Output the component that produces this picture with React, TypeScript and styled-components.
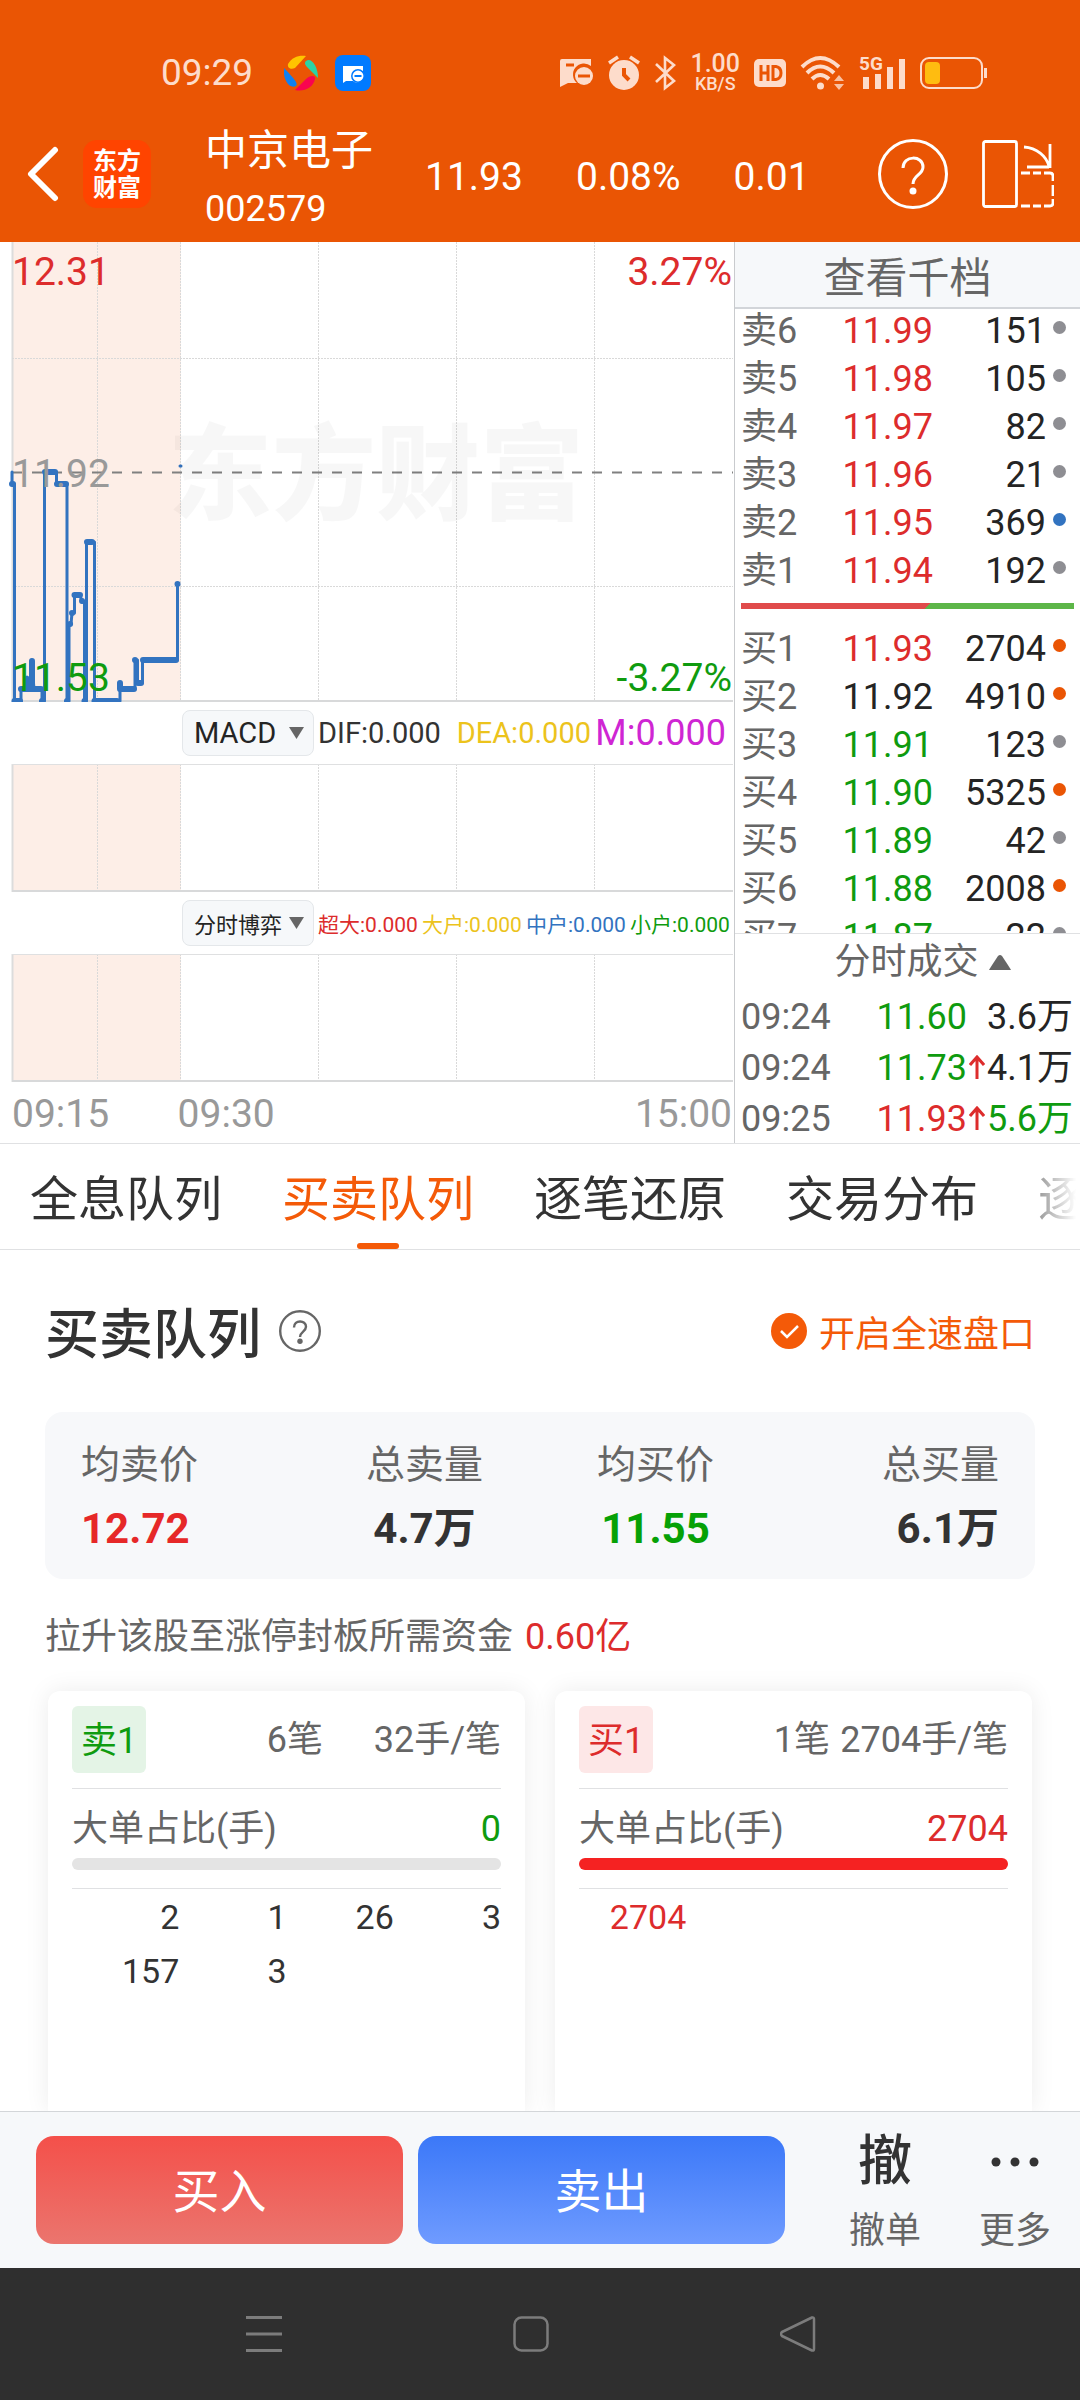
import React from "react";
import styled, { createGlobalStyle } from "styled-components";

const color = {
  brand: "#ea5504",
  accent: "#f45a08",
  up: "#dd2c2c",
  down: "#0f9b0f",
  text: "#333333",
  strong: "#242424",
  muted: "#666666",
  faint: "#999999",
  line: "#e0e1e3",
  panel: "#f6f8fa",
  blue: "#3273c0",
  yellow: "#ecc31c",
  magenta: "#cf26d3",
  status: "#fddccb",
};

const GlobalStyle = createGlobalStyle`
  * { box-sizing: border-box; }
  body {
    margin: 0;
    background: #ffffff;
    font-family: Roboto, "Noto Sans CJK SC", sans-serif;
    font-size: 36px;
    color: ${color.text};
  }
  button {
    margin: 0;
    padding: 0;
    border: 0;
    background: none;
    color: inherit;
    font: inherit;
    cursor: pointer;
  }
  h1, h2, p { margin: 0; font-weight: 400; }
  svg { display: block; }
`;

const Page = styled.div`
  display: flex;
  flex-direction: column;
  height: 100vh;
  overflow: hidden;
`;

/* ---------- Header ---------- */

const Top = styled.header`
  flex: none;
  background: ${color.brand};
  color: #ffffff;
`;

const StatusBar = styled.div`
  display: flex;
  align-items: center;
  justify-content: space-between;
  height: 106px;
  padding: 40px 92px 0 161px;
  color: ${color.status};
`;

const StatusGroup = styled.div<{ $gap: number }>`
  display: flex;
  align-items: center;
  gap: ${(p) => p.$gap}px;
`;

const Clock = styled.span`
  margin-right: 14px;
  font-size: 37px;
  line-height: 46px;
`;

const NetSpeed = styled.span`
  display: flex;
  flex-direction: column;
  align-items: center;
  font-size: 18px;
  font-weight: 500;
  line-height: 18px;

  b {
    font-size: 25px;
    font-weight: 500;
    line-height: 22px;
  }
`;

const TitleBar = styled.div`
  display: flex;
  align-items: center;
  height: 136px;
  padding: 0 26px 0 27px;
`;

const Logo = styled.div`
  width: 68px;
  height: 68px;
  margin: 0 54px 0 24px;
  padding: 8px 0;
  border-radius: 14px;
  background: #ff4400;
  font-size: 24px;
  font-weight: 700;
  line-height: 27px;
  text-align: center;
`;

const Stock = styled.div`
  width: 220px;
  padding-top: 14px;
`;

const StockName = styled.h1`
  font-size: 42px;
  line-height: 56px;
`;

const StockCode = styled.p`
  font-size: 36px;
  line-height: 60px;
`;

const Quote = styled.div`
  display: flex;
  gap: 53px;
  padding-top: 6px;
  font-size: 39px;
  line-height: 48px;
`;

const HeaderActions = styled.div`
  display: flex;
  align-items: center;
  gap: 34px;
  margin-left: auto;
`;

/* ---------- Market panel ---------- */

const Market = styled.section`
  display: grid;
  grid-template-columns: 734fr 346fr;
  flex: none;
  border-bottom: 1px solid ${color.line};
`;

const Charts = styled.div`
  min-width: 0;
`;

const Plot = styled.div<{ $height: number }>`
  position: relative;
  height: ${(p) => p.$height}px;

  svg {
    width: 100%;
    height: 100%;
  }
`;

const AxisLabel = styled.span<{ $tone: string; $side: "left" | "right"; $at: "top" | "middle" | "bottom" }>`
  position: absolute;
  ${(p) => (p.$side === "left" ? "left: 12px;" : "right: 2px;")}
  ${(p) => ({ top: "top: 7px;", middle: "top: 209px;", bottom: "bottom: 1px;" })[p.$at]}
  color: ${(p) => p.$tone};
  font-size: 39px;
  line-height: 46px;
`;

const Watermark = styled.span`
  position: absolute;
  top: 165px;
  left: 168px;
  color: rgba(0, 0, 0, 0.03);
  font-size: 104px;
  font-weight: 900;
  line-height: 140px;
`;

const IndicatorRow = styled.div`
  display: flex;
  align-items: center;
  height: 62px;
  padding-left: 24.8%;
`;

const Picker = styled.button<{ $size: number }>`
  display: flex;
  flex: none;
  align-items: center;
  justify-content: space-between;
  width: 132px;
  height: 46px;
  margin-right: 4px;
  padding: 0 9px 0 11px;
  border: 1px solid #e4e7ea;
  border-radius: 8px;
  background: ${color.panel};
  color: ${color.strong};
  font-size: ${(p) => p.$size}px;
`;

const Reading = styled.span<{ $tone: string; $size: number }>`
  flex: 1 1 0;
  min-width: 0;
  color: ${(p) => p.$tone};
  font-size: ${(p) => p.$size}px;
  white-space: nowrap;
`;

const TimeAxis = styled.div`
  display: grid;
  grid-template-columns: 23% 1fr auto;
  height: 61px;
  padding: 0 2px 0 12px;
  color: ${color.faint};
  font-size: 39px;
  line-height: 64px;
`;

const Book = styled.div`
  display: flex;
  flex-direction: column;
  min-width: 0;
  border-left: 1px solid #c9cbce;
`;

const BookTitle = styled.button`
  height: 67px;
  border-bottom: 2px solid #d2d5d9;
  background: ${color.panel};
  color: ${color.muted};
  font-size: 42px;
`;

const BookScroller = styled.div`
  height: 624px;
  overflow: hidden;
`;

const Table = styled.table<{ $row: number }>`
  width: 100%;
  table-layout: fixed;
  border-collapse: collapse;
  font-size: 36px;
  line-height: ${(p) => p.$row - 4}px;

  td,
  th {
    height: ${(p) => p.$row}px;
    padding: 4px 0 0;
    font-weight: 400;
    text-align: right;
    white-space: nowrap;
  }
  th {
    padding-left: 6px;
    color: ${color.muted};
    text-align: left;
  }
`;

const Col = styled.col<{ $width: number }>`
  width: ${(p) => p.$width}px;
`;

const ScrolledBook = styled.div`
  margin-top: -4px;
`;

const Tone = styled.td<{ $tone: string }>`
  color: ${(p) => p.$tone};
`;

const DotCell = styled.td`
  && {
    padding-left: 7px;
  }
`;

const Dot = styled.i<{ $tone: string }>`
  display: block;
  width: 13px;
  height: 13px;
  margin-bottom: 8px;
  border-radius: 50%;
  background: ${(p) => p.$tone};
`;

const Ratio = styled.div`
  height: 6px;
  margin: 10px 6px 14px;
  background: linear-gradient(135deg, #e04b4b 56%, #5db648 56%);
`;

const TradesTitle = styled.button`
  display: flex;
  align-items: center;
  justify-content: center;
  gap: 10px;
  height: 57px;
  padding-left: 30px;
  border-top: 1px solid ${color.line};
  color: ${color.muted};
  line-height: 54px;
`;

const ArrowCell = styled.td`
  svg {
    margin: 0 0 4px 2px;
  }
`;

const VolumeCell = styled.td<{ $tone: string }>`
  && {
    padding-right: 7px;
  }
  color: ${(p) => p.$tone};
`;

/* ---------- Tabs ---------- */

const Tabs = styled.nav`
  flex: none;
  border-bottom: 1px solid ${color.line};
`;

const TabStrip = styled.div`
  display: flex;
  gap: 60px;
  padding-left: 30px;
  overflow: hidden;
  mask-image: linear-gradient(to right, #000 calc(100% - 80px), transparent calc(100% - 4px));
`;

const Tab = styled.button<{ $active?: boolean }>`
  display: flex;
  flex: none;
  flex-direction: column;
  align-items: center;
  justify-content: space-between;
  height: 105px;
  padding-top: 20px;
  color: ${(p) => (p.$active ? color.accent : color.text)};
  font-size: 48px;
  line-height: 72px;

  &::after {
    content: "";
    width: 42px;
    height: 6px;
    border-radius: 3px;
    background: ${(p) => (p.$active ? color.accent : "transparent")};
  }
`;

/* ---------- Queue ---------- */

const Queue = styled.main`
  display: flex;
  flex: 1;
  flex-direction: column;
  min-height: 0;
  padding: 0 45px;
  overflow: hidden;
`;

const QueueHead = styled.div`
  display: flex;
  flex: none;
  align-items: center;
  height: 162px;
`;

const QueueTitle = styled.h2`
  margin-right: 18px;
  padding-top: 10px;
  font-size: 54px;
  font-weight: 500;
  line-height: 60px;
`;

const HelpButton = styled.button`
  color: ${color.muted};
`;

const FastToggle = styled.button`
  display: flex;
  align-items: center;
  gap: 12px;
  margin-left: auto;
  color: ${color.accent};
`;

const Stats = styled.dl`
  display: grid;
  grid-template-columns: 1fr 1fr;
  column-gap: 114px;
  flex: none;
  margin: 0;
  padding: 33px 36px 25px;
  border-radius: 18px;
  background: #f7f8fa;
`;

const StatPair = styled.div`
  display: flex;
  justify-content: space-between;
`;

const Stat = styled.div<{ $align: string }>`
  text-align: ${(p) => p.$align};

  dt {
    margin-bottom: 19px;
    color: ${color.muted};
    font-size: 39px;
    line-height: 40px;
  }
`;

const StatValue = styled.dd<{ $tone: string }>`
  margin: 0;
  color: ${(p) => p.$tone};
  font-size: 42px;
  font-weight: 700;
  line-height: 50px;
`;

const Note = styled.p`
  flex: none;
  padding-top: 4px;
  color: ${color.muted};
  line-height: 108px;

  em {
    margin-left: 12px;
    color: ${color.up};
    font-style: normal;
  }
`;

const Cards = styled.div`
  display: grid;
  grid-template-columns: 1fr 1fr;
  gap: 30px;
  flex: 1;
  padding: 0 3px;
`;

const Card = styled.article`
  padding: 0 24px;
  border-radius: 12px 12px 0 0;
  background: #ffffff;
  box-shadow: 0 0 24px rgba(0, 0, 0, 0.08);
`;

const CardHead = styled.div`
  display: grid;
  grid-template-columns: 74px 177fr 178fr;
  align-items: center;
  height: 98px;
  border-bottom: 1px solid ${color.line};
  color: ${color.muted};
  line-height: 64px;
  text-align: right;
  white-space: nowrap;
`;

const Badge = styled.span<{ $tone: string; $fill: string }>`
  height: 67px;
  padding-top: 4px;
  border-radius: 6px;
  background: ${(p) => p.$fill};
  color: ${(p) => p.$tone};
  line-height: 63px;
  text-align: center;
`;

const Share = styled.div<{ $tone: string }>`
  display: flex;
  justify-content: space-between;
  padding: 16px 0 5px;
  color: ${color.muted};
  line-height: 48px;

  b {
    color: ${(p) => p.$tone};
    font-weight: 400;
  }
`;

const Meter = styled.div`
  height: 12px;
  border-radius: 6px;
  background: #e4e4e4;
  overflow: hidden;
`;

const MeterFill = styled.div`
  height: 100%;
  background: #f52222;
`;

const Lots = styled.ul`
  display: grid;
  grid-template-columns: repeat(4, 1fr);
  margin: 18px 0 0;
  padding: 1px 0 0;
  border-top: 1px solid ${color.line};
  list-style: none;
  font-size: 34px;
  line-height: 54px;
  text-align: right;
`;

const Lot = styled.li<{ $big: boolean }>`
  color: ${(p) => (p.$big ? color.up : color.text)};
`;

/* ---------- Footer ---------- */

const ActionBar = styled.footer`
  display: flex;
  flex: none;
  align-items: center;
  height: 157px;
  padding-left: 36px;
  border-top: 1px solid #d3d6d9;
  background: ${color.panel};
`;

const TradeButtons = styled.div`
  display: flex;
  flex: 1;
  gap: 15px;
  margin-right: 35px;
`;

const TradeButton = styled.button<{ $from: string; $to: string }>`
  flex: 1;
  height: 108px;
  padding-bottom: 6px;
  border-radius: 18px;
  background: linear-gradient(${(p) => p.$from}, ${(p) => p.$to});
  color: #ffffff;
  font-size: 47px;
`;

const SideAction = styled.button`
  display: flex;
  flex-direction: column;
  align-items: center;
  gap: 15px;
  width: 130px;
  padding-top: 7px;
  color: ${color.muted};
  line-height: 48px;
`;

const SideIcon = styled.span`
  display: flex;
  align-items: center;
  height: 60px;
  color: ${color.text};
  font-size: 54px;
  font-weight: 500;
  line-height: 66px;
`;

const SystemNav = styled.nav`
  display: grid;
  grid-template-columns: repeat(3, 267px);
  justify-content: center;
  align-items: center;
  flex: none;
  height: 132px;
  padding-right: 18px;
  background: #2f2f2f;

  button {
    display: flex;
    justify-content: center;
  }
`;

/* ---------- Drawings ---------- */

const PinwheelIcon = () => (
  <svg width="34" height="36" viewBox="0 0 34 36" aria-hidden="true">
    <path d="M4 9C8 2 15 0 22 1L11 13C7 15 3 13 4 9Z" fill="#ffc400" />
    <path d="M22 6c5-4 12 5 12 17L24 13c-3-3-4-5-2-7Z" fill="#2bd3a4" />
    <path d="M31 24c-2 9-11 13-20 11l11-11c4-4 10-4 9 0Z" fill="#f9044f" />
    <path d="M0 13c1 1 9 9 12 14 3 6-5 6-8 2C1 25-1 19 0 13Z" fill="#0f80f2" />
  </svg>
);

const MailAppIcon = () => (
  <svg width="36" height="36" viewBox="0 0 36 36" aria-hidden="true">
    <rect width="36" height="36" rx="8" fill="#007aff" />
    <path d="M8 11h20v10a6 6 0 0 1-10 5H11l-3 2Z" fill="#fff" />
    <circle cx="23" cy="21" r="6.200" fill="#fff" stroke="#007aff" strokeWidth="1.500" />
    <path d="M19.500 21h7" stroke="#007aff" strokeWidth="2" />
  </svg>
);

const CardIcon = () => (
  <svg width="35" height="30" viewBox="0 0 35 30" fill="currentColor" aria-hidden="true">
    <path d="M3 1h29v7a10 10 0 0 0-14 17H9l-8 4V3a2 2 0 0 1 2-2Z" />
    <path d="M7 7h8" stroke={color.brand} strokeWidth="3" />
    <circle cx="25" cy="18" r="9" />
    <path d="M19 18h12" stroke={color.brand} strokeWidth="3" />
  </svg>
);

const AlarmIcon = () => (
  <svg width="32" height="36" viewBox="0 0 32 36" fill="none" stroke="currentColor" aria-hidden="true">
    <circle cx="16" cy="20" r="15" fill="currentColor" stroke="none" />
    <path d="M1 8l9-6M31 8l-9-6" strokeWidth="3.500" />
    <path d="M16 13v7l5 5" stroke={color.brand} strokeWidth="4" />
  </svg>
);

const BluetoothIcon = () => (
  <svg width="22" height="36" viewBox="0 0 22 36" fill="none" stroke="currentColor" strokeWidth="2.600" aria-hidden="true">
    <path d="M2 9l18 17-9 7V3l9 7L2 27" />
  </svg>
);

const HdIcon = () => (
  <svg width="32" height="28" viewBox="0 0 32 28" fill="none" aria-hidden="true">
    <rect width="32" height="28" rx="5" fill="currentColor" />
    <path d="M7 6v16M14 6v16M7 14h7M19 7.500v13h3q5-1 5-6.500t-5-6.500Z" stroke={color.brand} strokeWidth="3" />
  </svg>
);

const WifiIcon = () => (
  <svg width="45" height="36" viewBox="0 0 45 36" fill="none" stroke="currentColor" strokeWidth="4" aria-hidden="true">
    <path d="M2 12Q20-6 39 12M7 18Q20 5 34 18M12 24q8-8 17 0" />
    <circle cx="20.500" cy="31" r="3.500" fill="currentColor" stroke="none" />
    <path d="M34 26l5-6 5 6ZM34 29l5 6 5-6Z" fill="currentColor" stroke="none" opacity="0.800" />
  </svg>
);

const SignalWrap = styled.span`
  position: relative;
  width: 47px;
  height: 36px;
`;

const SignalLabel = styled.span`
  position: absolute;
  top: 0;
  left: 0;
  font-size: 19px;
  font-weight: 700;
  line-height: 18px;
`;

const Signal = () => (
  <SignalWrap>
    <svg width="47" height="36" viewBox="0 0 47 36" fill="currentColor" aria-hidden="true">
      <path d="M4 22h6v12H4ZM16 19h6v15h-6ZM28 12h6v22h-6ZM40 4h6v30h-6Z" />
    </svg>
    <SignalLabel>5G</SignalLabel>
  </SignalWrap>
);

const BatteryIcon = () => (
  <svg width="68" height="32" viewBox="0 0 68 32" fill="none" aria-hidden="true">
    <rect x="1" y="1" width="61" height="30" rx="8" stroke="currentColor" strokeWidth="2" />
    <rect x="5" y="5" width="15" height="22" rx="4" fill="#ffbc10" />
    <path d="M65.500 11v10" stroke="currentColor" strokeWidth="3" />
  </svg>
);

const BackIcon = () => (
  <svg width="32" height="56" viewBox="0 0 32 56" fill="none" stroke="#fff" strokeWidth="6" strokeLinecap="round" strokeLinejoin="round" aria-hidden="true">
    <path d="M28 4L4 28l24 24" />
  </svg>
);

const HelpIcon = ({ size, stroke }: { size: number; stroke: number }) => (
  <svg width={size} height={size} viewBox="0 0 70 70" fill="none" stroke="currentColor" strokeWidth={stroke} aria-hidden="true">
    <circle cx="35" cy="35" r={35 - stroke / 2} />
    <path d="M25 29c0-13 20-13 20-1 0 8-10 8-10 17" />
    <circle cx="35" cy="52" r={stroke + 0.5} fill="currentColor" stroke="none" />
  </svg>
);

const RotateIcon = () => (
  <svg width="72" height="68" viewBox="0 0 72 68" fill="none" stroke="#fff" strokeWidth="2.800" aria-hidden="true">
    <rect x="1.500" y="1.500" width="33" height="65" rx="2" />
    <path d="M42 7c13 1 22 9 25 19M45 27h22M68 4v24" />
    <path d="M39 33h9M51 33h8M62 33h6q3 0 3 3v5M71 45v11M39 66h9M51 66h8M62 66h6q3 0 3-3v-4" />
  </svg>
);

const Caret = ({ up }: { up?: boolean }) => (
  <svg width={up ? 22 : 15} height={up ? 15 : 12} viewBox="0 0 22 15" preserveAspectRatio="none" fill="#666" aria-hidden="true">
    <path d={up ? "M0 15Q1 13 9 1q2-2 4 0 8 12 9 14Z" : "M0 0h22L11 15Z"} />
  </svg>
);

const RiseArrow = () => (
  <svg width="16" height="24" viewBox="0 0 16 24" fill="none" stroke={color.up} strokeWidth="3" aria-hidden="true">
    <path d="M8 24V2M1 10l7-8 7 8" />
  </svg>
);

const CheckIcon = () => (
  <svg width="36" height="36" viewBox="0 0 36 36" aria-hidden="true">
    <circle cx="18" cy="18" r="18" fill={color.accent} />
    <path d="M10 18l6 6 11-11" fill="none" stroke="#fff" strokeWidth="2.500" />
  </svg>
);

const gridX = [98, 181, 319, 457, 595];

const Grid = ({ height, rows = [] }: { height: number; rows?: number[] }) => (
  <>
    <rect x="12" y="0" width="169" height={height} fill="#fdeee7" />
    <path d={`M12.500 0V${height}`} stroke="#dcdcdc" strokeWidth="2" />
    <g stroke="#d9d9d9" strokeWidth="1" strokeDasharray="2 1">
      {gridX.map((x) => (
        <path key={x} d={`M${x - 0.5} 0V${height}`} />
      ))}
      {rows.map((y) => (
        <path key={y} d={`M12 ${y}.500H733`} />
      ))}
    </g>
    <path d={`M12 ${height - 1}H733`} stroke="#d8d9da" strokeWidth="2" />
  </>
);

const PriceChart = () => (
  <svg viewBox="0 0 734 460" preserveAspectRatio="none" role="img" aria-label="分时走势">
    <Grid height={460} rows={[116, 344]} />
    <path d="M12 230.500H733" stroke="#808080" strokeWidth="2" strokeDasharray="10 10" />
    <g fill="none" stroke={color.blue} strokeLinecap="round" strokeLinejoin="round">
      <path
        strokeWidth="3"
        d="M12 230V242H14.500V459H21V447H27V435V447H31.500V418L34 447H42V459H44.500V230H56.500V242H67V459H69V382H71L72 371H74.500V353H80L82 360H84.500V459H86.500V300H94.500V459H120V441V447H135V418H137.500V441H142.500V418H177.500V342"
      />
      <path
        strokeWidth="6"
        d="M12 242h1M14.500 459H20M21 447H41M27 437v9M32 419v27M42 459h.1M45 230H55M57 242H66M67 459h.1M70 382h.1M72 371h.1M74.500 353H80M82 359h.1M84.500 459h.1M87 300H92M94.500 459H117M120 441V447H134M135 418v.1M138 441h3M143 418H176M177.500 342v.1"
      />
      <path strokeWidth="3" d="M180 224h1" />
    </g>
  </svg>
);

const IndicatorChart = () => (
  <svg viewBox="0 0 734 128" preserveAspectRatio="none" aria-hidden="true">
    <Grid height={128} />
    <path d="M12 .5H733" stroke="#dfe0e1" />
  </svg>
);

/* ---------- Data ---------- */

type Level = [name: string, price: string, volume: string, tone: string, dot: string];

const grayDot = "#8e8e93";

const sells: Level[] = [
  ["卖6", "11.99", "151", color.up, grayDot],
  ["卖5", "11.98", "105", color.up, grayDot],
  ["卖4", "11.97", "82", color.up, grayDot],
  ["卖3", "11.96", "21", color.up, grayDot],
  ["卖2", "11.95", "369", color.up, color.blue],
  ["卖1", "11.94", "192", color.up, grayDot],
];

const buys: Level[] = [
  ["买1", "11.93", "2704", color.up, color.brand],
  ["买2", "11.92", "4910", color.strong, color.brand],
  ["买3", "11.91", "123", color.down, grayDot],
  ["买4", "11.90", "5325", color.down, color.brand],
  ["买5", "11.89", "42", color.down, grayDot],
  ["买6", "11.88", "2008", color.down, color.brand],
  ["买7", "11.87", "22", color.down, grayDot],
];

const trades = [
  { time: "09:24", price: "11.60", tone: color.down, rise: false, volume: "3.6万", volumeTone: color.strong },
  { time: "09:24", price: "11.73", tone: color.down, rise: true, volume: "4.1万", volumeTone: color.strong },
  { time: "09:25", price: "11.93", tone: color.up, rise: true, volume: "5.6万", volumeTone: color.down },
];

const tabs = ["全息队列", "买卖队列", "逐笔还原", "交易分布", "逐笔成交"];

const queues = [
  { name: "卖1", tone: color.down, fill: "#e4f4e6", count: "6笔", average: "32手/笔", big: "0", share: 0, lots: ["2", "1", "26", "3", "157", "3"] },
  { name: "买1", tone: color.up, fill: "#fde7e7", count: "1笔", average: "2704手/笔", big: "2704", share: 100, lots: ["2704"] },
];

const Levels = ({ levels }: { levels: Level[] }) => (
  <Table $row={48}>
    <colgroup>
      <Col $width={105} />
      <Col $width={93} />
      <Col $width={113} />
      <col />
    </colgroup>
    <tbody>
      {levels.map(([name, price, volume, tone, dot]) => (
        <tr key={name}>
          <th scope="row">{name}</th>
          <Tone $tone={tone}>{price}</Tone>
          <Tone $tone={color.strong}>{volume}</Tone>
          <DotCell>
            <Dot $tone={dot} />
          </DotCell>
        </tr>
      ))}
    </tbody>
  </Table>
);

export default function App() {
  return (
    <Page>
      <GlobalStyle />
      <Top>
        <StatusBar>
          <StatusGroup $gap={17}>
            <Clock>09:29</Clock>
            <PinwheelIcon />
            <MailAppIcon />
          </StatusGroup>
          <StatusGroup $gap={14}>
            <CardIcon />
            <AlarmIcon />
            <BluetoothIcon />
            <NetSpeed>
              <b>1.00</b>KB/S
            </NetSpeed>
            <HdIcon />
            <WifiIcon />
            <Signal />
            <BatteryIcon />
          </StatusGroup>
        </StatusBar>
        <TitleBar>
          <button aria-label="返回">
            <BackIcon />
          </button>
          <Logo>
            东方
            <br />
            财富
          </Logo>
          <Stock>
            <StockName>中京电子</StockName>
            <StockCode>002579</StockCode>
          </Stock>
          <Quote>
            <span>11.93</span>
            <span>0.08%</span>
            <span>0.01</span>
          </Quote>
          <HeaderActions>
            <button aria-label="帮助">
              <HelpIcon size={70} stroke={3} />
            </button>
            <button aria-label="横屏">
              <RotateIcon />
            </button>
          </HeaderActions>
        </TitleBar>
      </Top>

      <Market>
        <Charts>
          <Plot $height={460}>
            <PriceChart />
            <Watermark aria-hidden="true">东方财富</Watermark>
            <AxisLabel $tone={color.up} $side="left" $at="top">12.31</AxisLabel>
            <AxisLabel $tone={color.up} $side="right" $at="top">3.27%</AxisLabel>
            <AxisLabel $tone={color.faint} $side="left" $at="middle">11.92</AxisLabel>
            <AxisLabel $tone={color.down} $side="left" $at="bottom">11.53</AxisLabel>
            <AxisLabel $tone={color.down} $side="right" $at="bottom">-3.27%</AxisLabel>
          </Plot>
          <IndicatorRow>
            <Picker $size={29}>
              MACD
              <Caret />
            </Picker>
            <Reading $tone={color.text} $size={29}>DIF:0.000</Reading>
            <Reading $tone={color.yellow} $size={29}>DEA:0.000</Reading>
            <Reading $tone={color.magenta} $size={36}>M:0.000</Reading>
          </IndicatorRow>
          <Plot $height={128}>
            <IndicatorChart />
          </Plot>
          <IndicatorRow>
            <Picker $size={22}>
              分时博弈
              <Caret />
            </Picker>
            <Reading $tone={color.up} $size={21}>超大:0.000</Reading>
            <Reading $tone={color.yellow} $size={21}>大户:0.000</Reading>
            <Reading $tone={color.blue} $size={21}>中户:0.000</Reading>
            <Reading $tone={color.down} $size={21}>小户:0.000</Reading>
          </IndicatorRow>
          <Plot $height={128}>
            <IndicatorChart />
          </Plot>
          <TimeAxis>
            <span>09:15</span>
            <span>09:30</span>
            <span>15:00</span>
          </TimeAxis>
        </Charts>

        <Book>
          <BookTitle>查看千档</BookTitle>
          <BookScroller>
            <ScrolledBook>
              <Levels levels={sells} />
              <Ratio />
              <Levels levels={buys} />
            </ScrolledBook>
          </BookScroller>
          <TradesTitle>
            分时成交
            <Caret up />
          </TradesTitle>
          <Table $row={51}>
            <colgroup>
              <Col $width={105} />
              <Col $width={127} />
              <Col $width={18} />
              <col />
            </colgroup>
            <tbody>
              {trades.map((t) => (
                <tr key={t.price}>
                  <th scope="row">{t.time}</th>
                  <Tone $tone={t.tone}>{t.price}</Tone>
                  <ArrowCell>{t.rise && <RiseArrow />}</ArrowCell>
                  <VolumeCell $tone={t.volumeTone}>{t.volume}</VolumeCell>
                </tr>
              ))}
            </tbody>
          </Table>
        </Book>
      </Market>

      <Tabs>
        <TabStrip>
          {tabs.map((name) => (
            <Tab key={name} $active={name === "买卖队列"}>
              {name}
            </Tab>
          ))}
        </TabStrip>
      </Tabs>

      <Queue>
        <QueueHead>
          <QueueTitle>买卖队列</QueueTitle>
          <HelpButton aria-label="买卖队列说明">
            <HelpIcon size={42} stroke={4} />
          </HelpButton>
          <FastToggle>
            <CheckIcon />
            开启全速盘口
          </FastToggle>
        </QueueHead>

        <Stats>
          <StatPair>
            <Stat $align="left">
              <dt>均卖价</dt>
              <StatValue $tone="#e62828">12.72</StatValue>
            </Stat>
            <Stat $align="center">
              <dt>总卖量</dt>
              <StatValue $tone={color.text}>4.7万</StatValue>
            </Stat>
          </StatPair>
          <StatPair>
            <Stat $align="center">
              <dt>均买价</dt>
              <StatValue $tone="#06a106">11.55</StatValue>
            </Stat>
            <Stat $align="right">
              <dt>总买量</dt>
              <StatValue $tone={color.text}>6.1万</StatValue>
            </Stat>
          </StatPair>
        </Stats>

        <Note>
          拉升该股至涨停封板所需资金<em>0.60亿</em>
        </Note>

        <Cards>
          {queues.map((q) => (
            <Card key={q.name}>
              <CardHead>
                <Badge $tone={q.tone} $fill={q.fill}>{q.name}</Badge>
                <span>{q.count}</span>
                <span>{q.average}</span>
              </CardHead>
              <Share $tone={q.tone}>
                大单占比(手)<b>{q.big}</b>
              </Share>
              <Meter>
                <MeterFill style={{ width: `${q.share}%` }} />
              </Meter>
              <Lots>
                {q.lots.map((lot, i) => (
                  <Lot key={i} $big={Number(lot) > 1000}>
                    {lot}
                  </Lot>
                ))}
              </Lots>
            </Card>
          ))}
        </Cards>
      </Queue>

      <ActionBar>
        <TradeButtons>
          <TradeButton $from="#f4504a" $to="#eb756e">买入</TradeButton>
          <TradeButton $from="#3b78f8" $to="#6f9bff">卖出</TradeButton>
        </TradeButtons>
        <SideAction>
          <SideIcon>撤</SideIcon>
          撤单
        </SideAction>
        <SideAction>
          <SideIcon>
            <svg width="48" height="10" viewBox="0 0 48 10" fill="currentColor" aria-hidden="true">
              <circle cx="5" cy="5" r="4.500" />
              <circle cx="24" cy="5" r="4.500" />
              <circle cx="43" cy="5" r="4.500" />
            </svg>
          </SideIcon>
          更多
        </SideAction>
      </ActionBar>

      <SystemNav>
        <button aria-label="最近任务">
          <svg width="36" height="36" viewBox="0 0 36 36" stroke="#7c7c7c" strokeWidth="3" aria-hidden="true">
            <path d="M0 1.500h36M0 18h36M0 34.500h36" />
          </svg>
        </button>
        <button aria-label="主屏幕">
          <svg width="36" height="36" viewBox="0 0 36 36" fill="none" stroke="#7c7c7c" strokeWidth="2.500" aria-hidden="true">
            <rect x="1.500" y="1.500" width="33" height="33" rx="7" />
          </svg>
        </button>
        <button aria-label="后退">
          <svg width="36" height="36" viewBox="0 0 36 36" fill="none" stroke="#7c7c7c" strokeWidth="2.500" strokeLinejoin="round" aria-hidden="true">
            <path d="M32 1.500Q34 1 34 3v30q0 2-2 1.500L2 20q-2-2 0-4Z" />
          </svg>
        </button>
      </SystemNav>
    </Page>
  );
}
